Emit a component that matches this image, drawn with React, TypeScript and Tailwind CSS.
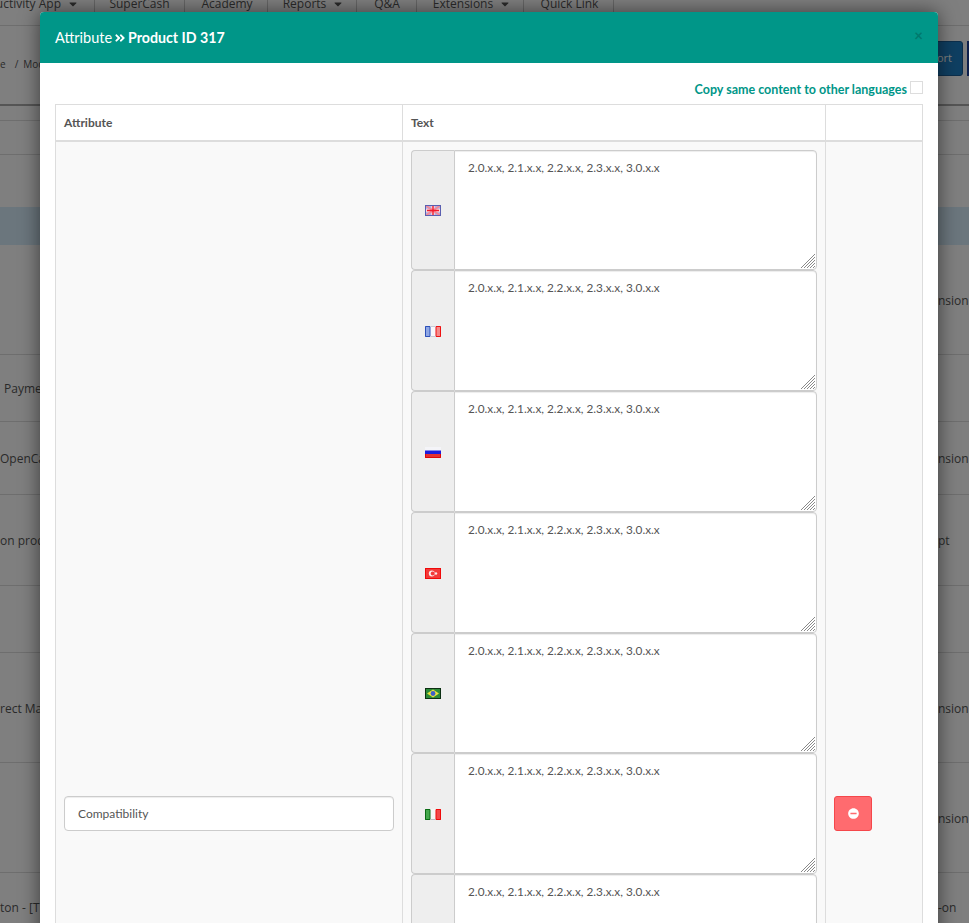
import React from 'react';
import { FaAngleDoubleRight, FaCaretDown, FaMinusCircle } from 'react-icons/fa';

const VERSIONS = '2.0.x.x, 2.1.x.x, 2.2.x.x, 2.3.x.x, 3.0.x.x';

const navItems = [
  { label: 'Productivity App', caret: true, className: 'w-[95px] justify-end pr-[15px]' },
  { label: 'SuperCash', className: 'w-[90px] justify-center' },
  { label: 'Academy', className: 'w-[83px] justify-center pl-[2px]' },
  { label: 'Reports', caret: true, className: 'w-[89px] justify-center pl-[3px]' },
  { label: 'Q&A', className: 'w-[60px] justify-center pl-[1px]' },
  { label: 'Extensions', caret: true, className: 'w-[107px] justify-center pl-[4px]' },
  { label: 'Quick Link', className: 'w-[90px] justify-center pl-[2px]' },
];

const pageRows = [
  { h: 'h-[110px]', left: '', right: 'nsion' },
  { h: 'h-[67px]', left: 'Payment', right: '', pad: 'pl-[4px]' },
  { h: 'h-[73px]', left: 'OpenCart', right: 'nsion' },
  { h: 'h-[91px]', left: 'on product', right: 'pt' },
  { h: 'h-[67px]', left: '', right: '' },
  { h: 'h-[110px]', left: 'rect Mail', right: 'nsion' },
  { h: 'h-[110px]', left: '', right: 'nsion' },
  { h: 'h-[69px]', left: 'ton - [T', right: '-on' },
];

function Flag({ code }: { code: string }) {
  const box = 'mt-[2px] block h-[11px] w-4 shrink-0';
  if (code === 'gb') {
    return (
      <svg viewBox="0 0 16 11" className={box}>
        <rect width="16" height="11" fill="#a9b4ea" />
        <path d="M8 0V11M0 5.5H16" stroke="#fbd5da" strokeWidth="3.4" />
        <path d="M0 0L16 11M16 0L0 11" stroke="#f08a9a" strokeWidth="2" />
        <path d="M8 1V10M2 5.5H14" stroke="#f21b2c" strokeWidth="1.4" />
        <rect x="0.5" y="0.5" width="15" height="10" fill="none" stroke="#5a5fb0" />
      </svg>
    );
  }
  if (code === 'fr') {
    return (
      <svg viewBox="0 0 16 11" className={box}>
        <rect width="5" height="11" fill="#8ea6e4" />
        <rect x="5" width="6" height="11" fill="#f8f8fb" />
        <rect x="11" width="5" height="11" fill="#f58a8a" />
        <path d="M0.5 0.5H5V10.5H0.5Z" fill="none" stroke="#2d50b8" />
        <path d="M11 0.5H15.5V10.5H11Z" fill="none" stroke="#ee1111" />
        <path d="M5 0.5H11M5 10.5H11" stroke="#c9cbd6" />
      </svg>
    );
  }
  if (code === 'ru') {
    return (
      <svg viewBox="0 0 16 11" className={box}>
        <rect width="16" height="4" fill="#f4f4f8" />
        <rect y="3.5" width="16" height="4" fill="#1c1cdc" />
        <rect y="7" width="16" height="4" fill="#e63030" />
        <path d="M0.5 7V10.5H15.5V7" fill="none" stroke="#dd0808" />
      </svg>
    );
  }
  if (code === 'tr') {
    return (
      <svg viewBox="0 0 16 11" className={box}>
        <rect width="16" height="11" fill="#f33a3a" />
        <rect x="0.5" y="0.5" width="15" height="10" fill="none" stroke="#f00a0a" />
        <circle cx="6.8" cy="5.5" r="3" fill="#fbeaea" />
        <circle cx="7.7" cy="5.5" r="2" fill="#f33a3a" />
        <circle cx="11" cy="5.5" r="1.2" fill="#fbeaea" />
      </svg>
    );
  }
  if (code === 'br') {
    return (
      <svg viewBox="0 0 16 11" className={box}>
        <rect width="16" height="11" fill="#2b8a38" />
        <path d="M8 1.5L14 5.5L8 9.5L2 5.5Z" fill="#e9e13c" />
        <circle cx="8" cy="5.5" r="2.4" fill="#3f5fc8" />
        <rect x="0.5" y="0.5" width="15" height="10" fill="none" stroke="#0c2f12" />
      </svg>
    );
  }
  return (
    <svg viewBox="0 0 16 11" className={box}>
      <rect width="5" height="11" fill="#44a84c" />
      <rect x="5" width="6" height="11" fill="#f6f6f6" />
      <rect x="11" width="5" height="11" fill="#f24848" />
      <path d="M0.5 0.5H5V10.5H0.5Z" fill="none" stroke="#0a6a14" />
      <path d="M11 0.5H15.5V10.5H11Z" fill="none" stroke="#f00a0a" />
      <path d="M5 10.5H11" stroke="#bbb" />
    </svg>
  );
}

function LanguageRow({ code }: { code: string }) {
  return (
    <div className="flex h-[120.75px]">
      <div className="flex w-[43px] shrink-0 items-center justify-center rounded-l-[4px] border border-r-0 border-[#ccc] bg-[#eee]">
        <Flag code={code} />
      </div>
      <div className="relative min-w-0 flex-1">
        <textarea
          readOnly
          defaultValue={VERSIONS}
          className="block h-full w-full resize-none rounded-r-[4px] border border-[#ccc] bg-white px-[13px] py-[8px] text-[11.8px] leading-[17px] text-[#555] shadow-[inset_0_1px_1px_rgba(0,0,0,0.075)] outline-none"
        />
        {/* resize grip */}
        <svg viewBox="0 0 14 14" className="absolute right-[2px] bottom-[2px] h-[14px] w-[14px]">
          <path d="M0 14L14 0M3 14L14 3M6 14L14 6M9 14L14 9M12 14L14 12" stroke="#8a8a8a" strokeWidth="1" />
        </svg>
      </div>
    </div>
  );
}

export default function App() {
  const languages = ['gb', 'fr', 'ru', 'tr', 'br', 'it', 'gb', 'fr', 'ru', 'tr', 'br'];

  return (
    <div className="relative h-[923px] w-[969px] overflow-hidden bg-white font-['Open_Sans',sans-serif] text-[12px] text-[#555]">
      {/* page behind the dialog */}
      <nav className="flex h-[26px] items-start overflow-hidden border-b border-[#ddd]">
        {navItems.map((item) => (
          <div
            key={item.label}
            className={`flex h-[22px] shrink-0 items-center gap-[6px] overflow-hidden border-r border-[#ccc] pb-[14px] text-[12px] whitespace-nowrap ${item.className}`}
          >
            {item.label}
            {item.caret && <FaCaretDown className="shrink-0 text-[12px]" />}
          </div>
        ))}
      </nav>
      <div className="flex h-[80px] items-start justify-between border-b-2 border-[#aaa] pt-[31px]">
        <span className="flex text-[10px] whitespace-nowrap">
          <span className="mr-[9px]">e</span>
          <span className="mr-[5px]">/</span>
          <span>Modules</span>
        </span>
        <div className="flex gap-[4px]">
          <div className="-mt-[16px] flex h-[35px] w-[31px] items-center rounded-[3px] border border-[#1a5f99] bg-[#1f7fc4] pl-[4px] text-[11px] text-white">
            ort
          </div>
          <div className="-mt-[16px] h-[35px] w-[2px] border border-[#1a3f99] bg-[#2a3f9f]" />
        </div>
      </div>
      <div className="h-[15px] border-b border-[#ddd]" />
      <div className="h-[34px] border-b border-[#ddd]" />
      <div className="h-[52px]" />
      <div className="h-[38px] bg-[#d6ecfb]" />
      {pageRows.map((row, index) => (
        <div key={index} className={`flex items-center justify-between border-b border-[#ddd] pt-[2px] text-[12px] whitespace-nowrap ${row.h} ${row.pad ?? ''}`}>
          <span>{row.left}</span>
          <span className="w-[31px]">{row.right}</span>
        </div>
      ))}

      <div className="absolute inset-0 bg-black/50" />

      {/* dialog */}
      <div className="absolute top-[12px] left-[40px] w-[898px] rounded-t-[4px] bg-white font-['Lato',sans-serif] shadow-[0_0_20px_rgba(0,0,0,0.55)]">
        <div className="flex h-[51px] items-center justify-between rounded-t-[4px] bg-[#009688] px-[15px] text-white">
          <h4 className="flex items-center gap-[2px] text-[14.5px]">
            Attribute
            <FaAngleDoubleRight className="text-[12px]" />
            <b className="text-[14.2px] font-bold">Product ID 317</b>
          </h4>
          <span className="-mt-[4px] text-[15px] leading-none font-bold text-[#00796d]">×</span>
        </div>
        <div className="px-[15px] pt-[18px]">
          <div className="flex items-start justify-end gap-[3px]">
            <span className="text-[12.5px] leading-[18px] font-bold text-[#009688]">Copy same content to other languages</span>
            <span className="h-[13px] w-[13px] border border-[#ddd] bg-white" />
          </div>
          <table className="mt-[5px] w-[868px] table-fixed border-collapse border border-[#ddd] text-[12px]">
            <thead>
              <tr className="h-[36px] border-b-2 border-[#ddd] bg-white">
                <th className="w-[347px] border-r border-[#ddd] px-[8px] pt-[2px] text-left font-bold text-[#555]">Attribute</th>
                <th className="w-[423px] border-r border-[#ddd] px-[8px] pt-[2px] text-left font-bold text-[#555]">Text</th>
                <th />
              </tr>
            </thead>
            <tbody>
              <tr className="bg-[#f9f9f9]">
                <td className="border-r border-[#ddd] px-[8px] align-middle">
                  <input
                    readOnly
                    defaultValue="Compatibility"
                    className="h-[35px] w-full rounded-[4px] border border-[#ccc] bg-white px-[13px] text-[12px] text-[#555] shadow-[inset_0_1px_1px_rgba(0,0,0,0.075)] outline-none"
                  />
                </td>
                <td className="border-r border-[#ddd] px-[8px] pt-[8px] pb-[8px]">
                  {languages.map((code, index) => (
                    <LanguageRow key={index} code={code} />
                  ))}
                </td>
                <td className="px-[8px] align-middle">
                  <button className="flex h-[35px] w-[38px] items-center justify-center rounded-[3px] border border-[#f5474b] bg-[#ff6b6f] text-[11px] text-white">
                    <FaMinusCircle />
                  </button>
                </td>
              </tr>
            </tbody>
          </table>
        </div>
      </div>
    </div>
  );
}
